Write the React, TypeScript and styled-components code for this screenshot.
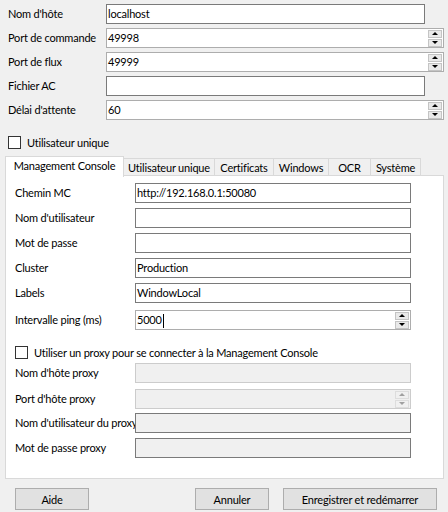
import React from 'react'
import styled, { createGlobalStyle } from 'styled-components'

const GlobalStyle = createGlobalStyle`
  html, body {
    margin: 0;
    padding: 0;
    background: #f0f0f0;
  }
  body {
    font-family: Lato, "Liberation Sans", sans-serif;
    font-size: 11px;
    letter-spacing: -0.2px;
    color: #000000;
  }
`

const Window = styled.div`
  width: 448px;
  height: 512px;
  box-sizing: border-box;
  padding-top: 4px;
  display: flex;
  flex-direction: column;
  overflow: hidden;
`

const TopForm = styled.div`
  display: grid;
  grid-template-columns: 98px auto;
  row-gap: 4px;
  align-items: center;
  padding-left: 8px;
`

const Label = styled.div`
  white-space: nowrap;
  line-height: 20px;
`

const Box = styled.div<{ $w: number; $disabled?: boolean; $readonly?: boolean; $spin?: boolean }>`
  width: ${({ $w }) => $w}px;
  height: 20px;
  box-sizing: border-box;
  border: 1px solid
    ${({ $disabled, $spin }) => ($disabled ? '#cccccc' : $spin ? '#adadad' : '#7a7a7a')};
  background: ${({ $disabled, $readonly }) => ($disabled || $readonly ? '#f0f0f0' : '#ffffff')};
  display: flex;
  align-items: center;
  padding-left: 1px;
  position: relative;
`

const Value = styled.span`
  flex: 1;
  white-space: nowrap;
  line-height: 18px;
`

const Caret = styled.span`
  display: inline-block;
  width: 1px;
  height: 14px;
  background: #000000;
  vertical-align: middle;
  margin-left: 1px;
`

const SpinColumn = styled.div`
  display: flex;
  flex-direction: column;
  gap: 1px;
  margin-right: 1px;
  height: 17px;
`

const SpinButton = styled.div<{ $disabled?: boolean }>`
  width: 14px;
  flex: 1;
  box-sizing: border-box;
  background: ${({ $disabled }) => ($disabled ? '#f0f0f0' : '#e9e9e9')};
  border: 1px solid ${({ $disabled }) => ($disabled ? '#dddddd' : '#c4c4c4')};
  display: flex;
  align-items: center;
  justify-content: center;
`

const Arrow = styled.span<{ $down?: boolean; $disabled?: boolean }>`
  width: 0;
  height: 0;
  border-left: 3px solid transparent;
  border-right: 3px solid transparent;
  ${({ $down, $disabled }) =>
    $down
      ? `border-top: 3px solid ${$disabled ? '#a0a0a0' : '#000'};`
      : `border-bottom: 3px solid ${$disabled ? '#a0a0a0' : '#000'};`}
`

const CheckRow = styled.label<{ $left: number; $top: number }>`
  display: flex;
  align-items: center;
  gap: 6px;
  margin-left: ${({ $left }) => $left}px;
  margin-top: ${({ $top }) => $top}px;
  height: 15px;
  white-space: nowrap;
`

const CheckBox = styled.span`
  width: 13px;
  height: 13px;
  box-sizing: border-box;
  border: 1px solid #333333;
  background: #ffffff;
  flex-shrink: 0;
`

const Tabs = styled.div`
  margin-top: 5px;
  margin-left: 5px;
  width: 439px;
  display: flex;
  flex-direction: column;
`

const TabStrip = styled.div`
  display: flex;
  align-items: flex-end;
  height: 21px;
  position: relative;
  z-index: 1;
`

const Tab = styled.div<{ $w: number; $active?: boolean }>`
  width: ${({ $w }) => $w}px;
  box-sizing: border-box;
  height: ${({ $active }) => ($active ? 21 : 18)}px;
  margin-bottom: ${({ $active }) => ($active ? -1 : 0)}px;
  margin-left: -1px;
  background: ${({ $active }) => ($active ? '#ffffff' : '#f0f0f0')};
  border: 1px solid #d9d9d9;
  border-bottom: ${({ $active }) => ($active ? 'none' : '1px solid #d9d9d9')};
  display: flex;
  align-items: center;
  justify-content: center;
  white-space: nowrap;
  padding-bottom: ${({ $active }) => ($active ? 3 : 0)}px;
  &:first-child {
    margin-left: 0;
  }
`

const Panel = styled.div`
  height: 304px;
  box-sizing: border-box;
  background: #ffffff;
  border: 1px solid #d9d9d9;
  margin-top: -1px;
  padding: 7px 0 0 9px;
  display: flex;
  flex-direction: column;
`

const Row = styled.div<{ $top: number }>`
  display: grid;
  grid-template-columns: 120px auto;
  align-items: center;
  margin-top: ${({ $top }) => $top}px;
`

const Footer = styled.div`
  display: flex;
  align-items: center;
  margin-top: 9px;
  padding-left: 15px;
`

const Button = styled.div<{ $w: number; $gap?: number }>`
  width: ${({ $w }) => $w}px;
  height: 22px;
  box-sizing: border-box;
  background: #e1e1e1;
  border: 1px solid #adadad;
  display: flex;
  align-items: center;
  justify-content: center;
  margin-left: ${({ $gap }) => $gap ?? 0}px;
  white-space: nowrap;
`

const Spinner: React.FC<{ disabled?: boolean }> = ({ disabled }) => (
  <SpinColumn>
    <SpinButton $disabled={disabled}>
      <Arrow $disabled={disabled} />
    </SpinButton>
    <SpinButton $disabled={disabled}>
      <Arrow $down $disabled={disabled} />
    </SpinButton>
  </SpinColumn>
)

const tabs = [
  { name: 'Management Console', w: 119, active: true },
  { name: 'Utilisateur unique', w: 92 },
  { name: 'Certificats', w: 60 },
  { name: 'Windows', w: 56 },
  { name: 'OCR', w: 43 },
  { name: 'Système', w: 51 },
]

const App: React.FC = () => {
  return (
    <>
      <GlobalStyle />
      <Window>
        <TopForm>
          <Label>Nom d'hôte</Label>
          <Box $w={319}>
            <Value>localhost</Value>
          </Box>
          <Label>Port de commande</Label>
          <Box $w={338} $spin>
            <Value>49998</Value>
            <Spinner />
          </Box>
          <Label>Port de flux</Label>
          <Box $w={338} $spin>
            <Value>49999</Value>
            <Spinner />
          </Box>
          <Label>Fichier AC</Label>
          <Box $w={319} />
          <Label>Délai d'attente</Label>
          <Box $w={338} $spin>
            <Value>60</Value>
            <Spinner />
          </Box>
        </TopForm>

        <CheckRow $left={8} $top={15}>
          <CheckBox />
          Utilisateur unique
        </CheckRow>

        <Tabs>
          <TabStrip>
            {tabs.map((t) => (
              <Tab key={t.name} $w={t.w} $active={t.active}>
                {t.name}
              </Tab>
            ))}
          </TabStrip>
          <Panel>
            <Row $top={0}>
              <Label>Chemin MC</Label>
              <Box $w={276}>
                <Value>http://192.168.0.1:50080</Value>
              </Box>
            </Row>
            <Row $top={5}>
              <Label>Nom d'utilisateur</Label>
              <Box $w={276} />
            </Row>
            <Row $top={5}>
              <Label>Mot de passe</Label>
              <Box $w={276} />
            </Row>
            <Row $top={5}>
              <Label>Cluster</Label>
              <Box $w={276}>
                <Value>Production</Value>
              </Box>
            </Row>
            <Row $top={5}>
              <Label>Labels</Label>
              <Box $w={276}>
                <Value>WindowLocal</Value>
              </Box>
            </Row>
            <Row $top={7}>
              <Label>Intervalle ping (ms)</Label>
              <Box $w={276} $spin>
                <Value>
                  5000
                  <Caret />
                </Value>
                <Spinner />
              </Box>
            </Row>

            <CheckRow $left={0} $top={15}>
              <CheckBox />
              Utiliser un proxy pour se connecter à la Management Console
            </CheckRow>

            <Row $top={3}>
              <Label>Nom d'hôte proxy</Label>
              <Box $w={276} $disabled />
            </Row>
            <Row $top={6}>
              <Label>Port d'hôte proxy</Label>
              <Box $w={276} $disabled>
                <Value />
                <Spinner disabled />
              </Box>
            </Row>
            <Row $top={4}>
              <Label>Nom d'utilisateur du proxy</Label>
              <Box $w={276} $readonly />
            </Row>
            <Row $top={5}>
              <Label>Mot de passe proxy</Label>
              <Box $w={276} $readonly />
            </Row>
          </Panel>
        </Tabs>

        <Footer>
          <Button $w={74}>Aide</Button>
          <Button $w={74} $gap={106}>
            Annuler
          </Button>
          <Button $w={154} $gap={14}>
            Enregistrer et redémarrer
          </Button>
        </Footer>
      </Window>
    </>
  )
}

export default App
